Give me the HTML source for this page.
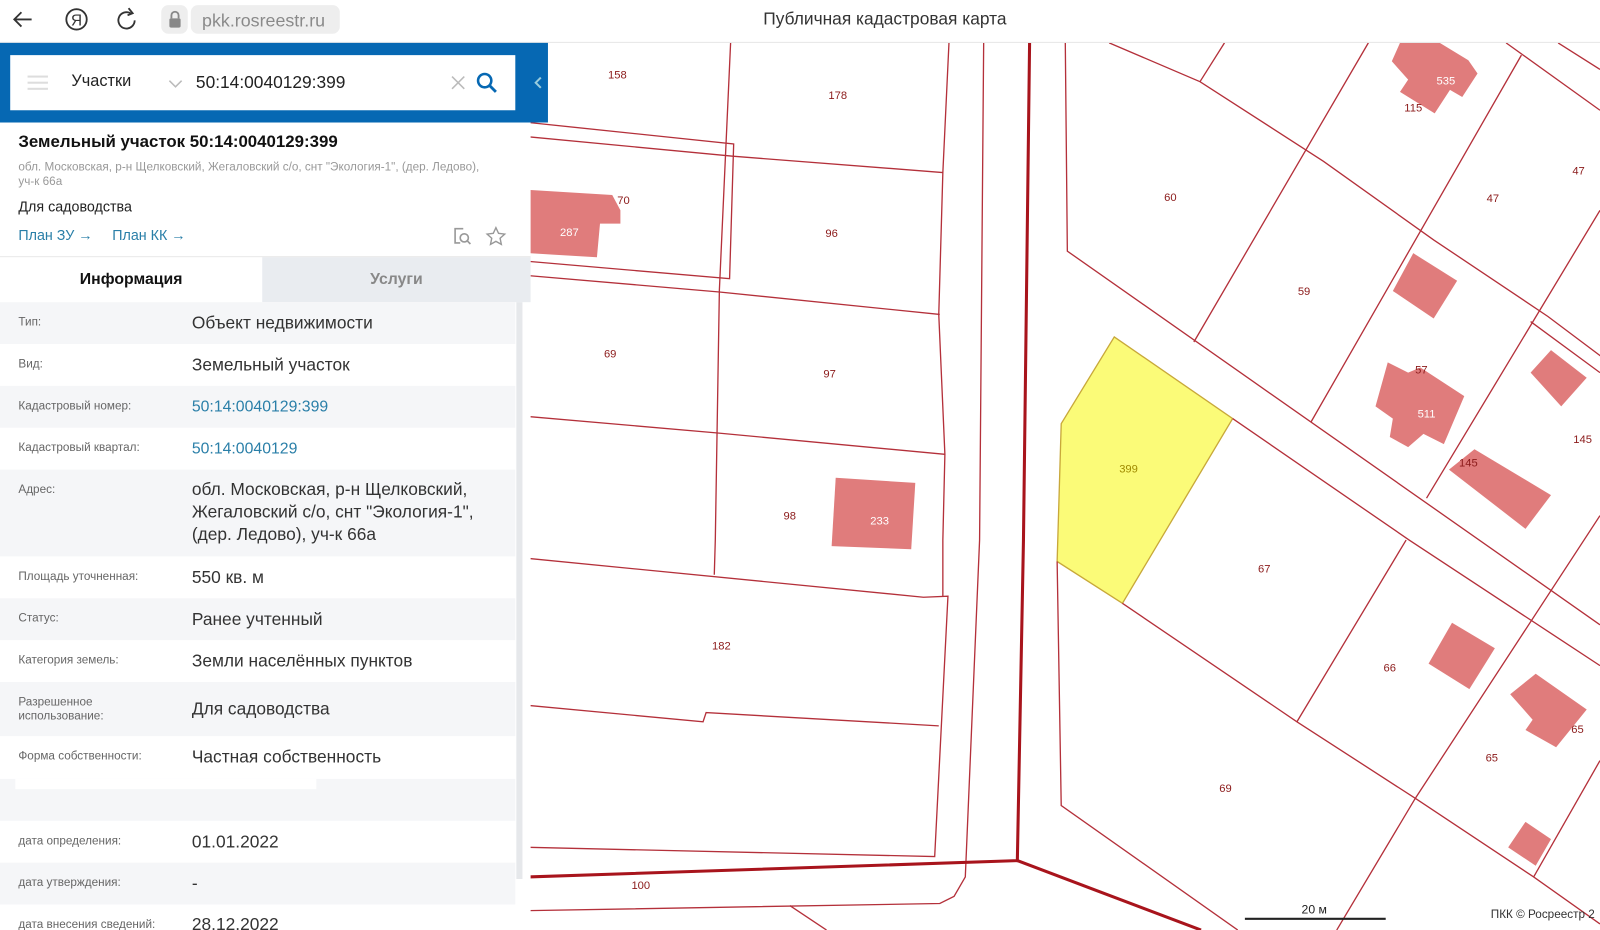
<!DOCTYPE html>
<html><head><meta charset="utf-8"><style>
*{margin:0;padding:0;box-sizing:border-box}
html,body{width:1600px;height:930px;overflow:hidden;background:#fff;font-family:"Liberation Sans","DejaVu Sans",sans-serif}
#w{position:absolute;left:0;top:0;width:1568px;height:911px;transform:scale(1.0204,1.0209);transform-origin:0 0;overflow:hidden}
svg.map{position:absolute;left:0;top:0}
.bar{position:absolute;left:0;top:0;width:1568px;height:42px;background:#fff;border-bottom:1px solid #e6e6e6}
.panel{position:absolute;left:0;top:42px;width:520px;height:869px;background:#fff}
.hdr{position:absolute;left:0;top:42px;width:537px;height:78px;background:#0668b3}
.sbox{position:absolute;left:10px;top:54px;width:495px;height:54px;background:#fff}
.row{position:absolute;left:0;width:505px;}
.lab{position:absolute;left:18px;font-size:11.5px;color:#666}
.val{position:absolute;left:188px;font-size:17px;color:#333;line-height:22px}
.lnk{color:#2a7fa8}
</style></head><body><div id="w">
<svg class="map" width="1568" height="911" viewBox="0 0 1568 911">
<g fill="#e07c7c">
<polygon points="518,186 600,191 608,206 608,219 588,219 585,252 518,248"/>
<polygon points="819,468 897,473 893,538 815,535"/>
<polygon points="1372,42 1411,42 1439,59 1448,72 1433,95 1421,88 1406,111 1372,90 1380,78 1364,60"/>
<polygon points="1385,248 1428,275 1405,312 1365,285"/>
<polygon points="1360,355 1380,365 1392,360 1435,388 1415,435 1395,425 1380,438 1362,428 1365,410 1348,398"/>
<polygon points="1500,365 1520,343 1555,370 1530,398"/>
<polygon points="1420,460 1445,440 1520,485 1495,518"/>
<polygon points="1400,650 1423,610 1465,635 1440,675"/>
<polygon points="1480,680 1505,660 1555,695 1525,732 1495,715 1502,705"/>
<polygon points="1478,830 1495,805 1520,822 1505,848"/>
</g>
<polygon points="1092,330 1208,410 1100,591 1036,550 1040,415" fill="#fbfb78" stroke="#c8a83a" stroke-width="1.3"/>
<g fill="none" stroke="#b4303a" stroke-width="1.3">
<polyline points="518,120 719,141 715,273 518,256"/>
<polyline points="518,134 718,153 924,169"/>
<polyline points="518,270 705,286 921,308"/>
<polyline points="518,408 702,424 926,445"/>
<polyline points="716,42 705,284 701,529 700,563"/>
<polyline points="930,42 924,169 920,308 926,445 924,529 924,584"/>
<polyline points="518,547 905,585 929,584 916,839 518,830"/>
<polyline points="518,691 689,707 692,698 920,711"/>
<polyline points="964,42 960,529 946,859 935,878 921,885 518,892"/>
<line x1="774" y1="887" x2="810" y2="911"/>
<polyline points="1044,42 1046,246 1568,612"/>
<polyline points="1087,42 1176,80 1297,158 1405,235 1517,310 1581,358"/>
<line x1="1176" y1="80" x2="1200" y2="42"/>
<line x1="1170" y1="335" x2="1341" y2="42"/>
<line x1="1285" y1="413" x2="1491" y2="54"/>
<line x1="1476" y1="42" x2="1568" y2="108"/>
<line x1="1527" y1="42" x2="1568" y2="68"/>
<line x1="1398" y1="488" x2="1568" y2="206"/>
<line x1="1500" y1="315" x2="1568" y2="365"/>
<polyline points="1208,410 1381,529 1568,652"/>
<polyline points="1100,591 1271,707 1387,782 1503,859 1568,905"/>
<polyline points="1036,550 1040,789 1213,911"/>
<line x1="1271" y1="707" x2="1378" y2="529"/>
<polyline points="1568,505 1387,782 1310,911"/>
<line x1="1503" y1="859" x2="1568" y2="745"/>
</g>
<g fill="none" stroke="#a8141c" stroke-width="3">
<polyline points="1009,42 1003,529 997,843 518,859"/>
<line x1="997" y1="843" x2="1177" y2="911"/>
</g>
<g font-size="11" fill="#8b1a1a" text-anchor="middle" font-family="Liberation Sans,sans-serif">
<text x="605" y="77">158</text><text x="821" y="97">178</text><text x="611" y="200">70</text>
<text x="558" y="231" fill="#fff">287</text><text x="815" y="232">96</text><text x="598" y="350">69</text>
<text x="813" y="370">97</text><text x="774" y="509">98</text><text x="862" y="514" fill="#fff">233</text>
<text x="707" y="636">182</text><text x="628" y="871">100</text><text x="1147" y="197">60</text>
<text x="1278" y="289">59</text><text x="1463" y="198">47</text><text x="1547" y="171">47</text>
<text x="1417" y="83" fill="#fff">535</text><text x="1385" y="109">115</text><text x="1393" y="366">57</text>
<text x="1398" y="409" fill="#fff">511</text><text x="1439" y="457">145</text><text x="1551" y="434">145</text>
<text x="1106" y="463" fill="#a08a00">399</text><text x="1239" y="561">67</text><text x="1362" y="658">66</text>
<text x="1462" y="746">65</text><text x="1546" y="718">65</text><text x="1201" y="776">69</text>
</g>
<line x1="1220" y1="900" x2="1358" y2="900" stroke="#222" stroke-width="2"/>
<text x="1288" y="895" font-size="12" text-anchor="middle" fill="#222">20 м</text>
<text x="1461" y="899" font-size="11.5" fill="#333">ПКК © Росреестр 2</text>
</svg>

<div class="bar">
<svg width="340" height="42" style="position:absolute;left:0;top:0">
<path d="M31 19H14M21 12l-7 7 7 7" stroke="#333" stroke-width="1.8" fill="none"/>
<circle cx="75" cy="19" r="10" stroke="#333" stroke-width="1.8" fill="none"/>
<text x="75" y="25" font-size="15" text-anchor="middle" fill="#333">Я</text>
<path d="M132 20a8 8 0 1 1-4-7" stroke="#333" stroke-width="1.8" fill="none"/><path d="M126 8l4 5-5 2" stroke="#333" stroke-width="1.8" fill="none"/>
<rect x="158" y="5" width="26" height="28" rx="7" fill="#eee"/>
<rect x="166" y="18" width="11" height="9" rx="1.5" fill="#888"/><path d="M168 18v-3a3.5 3.5 0 0 1 7 0v3" stroke="#888" stroke-width="1.8" fill="none"/>
<rect x="187" y="5" width="146" height="28" rx="7" fill="#eee"/>
<text x="198" y="26" font-size="17.5" fill="#8a8a8a">pkk.rosreestr.ru</text>
</svg>
<div style="position:absolute;left:748px;top:9px;font-size:17px;color:#333">Публичная кадастровая карта</div>
</div>

<div class="panel">
<div style="position:absolute;left:18px;top:88px;font-size:16.5px;font-weight:bold;color:#111">Земельный участок 50:14:0040129:399</div>
<div style="position:absolute;left:18px;top:115px;width:470px;font-size:11.5px;line-height:14px;color:#999">обл. Московская, р-н Щелковский, Жегаловский с/о, снт "Экология-1", (дер. Ледово), уч-к 66а</div>
<div style="position:absolute;left:18px;top:152px;font-size:14px;color:#222">Для садоводства</div>
<div style="position:absolute;left:18px;top:180px;font-size:14px" class="lnk">План ЗУ →</div>
<div style="position:absolute;left:110px;top:180px;font-size:14px" class="lnk">План КК →</div>
<svg width="60" height="24" style="position:absolute;left:440px;top:178px">
<path d="M14 4H6v14h5" stroke="#999" stroke-width="1.6" fill="none"/><circle cx="15" cy="13" r="4" stroke="#999" stroke-width="1.6" fill="none"/><path d="M18 16l3 3" stroke="#999" stroke-width="1.6"/>
<path d="M46 3l2.6 5.6 6 .7-4.5 4.1 1.2 6-5.3-3-5.3 3 1.2-6-4.5-4.1 6-.7z" stroke="#999" stroke-width="1.4" fill="none"/>
</svg>
<div style="position:absolute;left:0;top:209px;width:520px;height:1px;background:#e5e5e5"></div>
<div style="position:absolute;left:0;top:210px;width:257px;height:44px;background:#fff;font-size:15.5px;font-weight:bold;color:#111;text-align:center;line-height:44px">Информация</div>
<div style="position:absolute;left:257px;top:210px;width:263px;height:44px;background:#e9ecf0;font-size:15.5px;font-weight:bold;color:#888;text-align:center;line-height:44px">Услуги</div>
</div>

<div style="position:absolute;left:0;top:296px;width:520px;height:615px">
<div class="row" style="top:0;height:41px;background:#f5f6f8"><span class="lab" style="top:14px">Тип:</span><span class="val" style="top:10px">Объект недвижимости</span></div>
<div class="row" style="top:41px;height:41px"><span class="lab" style="top:14px">Вид:</span><span class="val" style="top:10px">Земельный участок</span></div>
<div class="row" style="top:82px;height:41px;background:#f5f6f8"><span class="lab" style="top:14px">Кадастровый номер:</span><span class="val lnk" style="top:10px;font-size:15.5px">50:14:0040129:399</span></div>
<div class="row" style="top:123px;height:41px"><span class="lab" style="top:14px">Кадастровый квартал:</span><span class="val lnk" style="top:10px;font-size:15.5px">50:14:0040129</span></div>
<div class="row" style="top:164px;height:85px;background:#f5f6f8"><span class="lab" style="top:14px">Адрес:</span><span class="val" style="top:9px;width:310px">обл. Московская, р-н Щелковский, Жегаловский с/о, снт "Экология-1", (дер. Ледово), уч-к 66а</span></div>
<div class="row" style="top:249px;height:41px"><span class="lab" style="top:14px">Площадь уточненная:</span><span class="val" style="top:10px">550 кв. м</span></div>
<div class="row" style="top:290px;height:41px;background:#f5f6f8"><span class="lab" style="top:14px">Статус:</span><span class="val" style="top:10px">Ранее учтенный</span></div>
<div class="row" style="top:331px;height:41px"><span class="lab" style="top:14px">Категория земель:</span><span class="val" style="top:10px">Земли населённых пунктов</span></div>
<div class="row" style="top:372px;height:53px;background:#f5f6f8"><span class="lab" style="top:13px;line-height:14px">Разрешенное<br>использование:</span><span class="val" style="top:16px">Для садоводства</span></div>
<div class="row" style="top:425px;height:42px"><span class="lab" style="top:14px">Форма собственности:</span><span class="val" style="top:10px">Частная собственность</span></div>
<div class="row" style="top:467px;height:41px;background:#f5f6f8"><div style="position:absolute;left:15px;top:0;width:295px;height:10px;background:#fff"></div></div>
<div class="row" style="top:508px;height:41px"><span class="lab" style="top:14px">дата определения:</span><span class="val" style="top:10px">01.01.2022</span></div>
<div class="row" style="top:549px;height:41px;background:#f5f6f8"><span class="lab" style="top:14px">дата утверждения:</span><span class="val" style="top:10px">-</span></div>
<div class="row" style="top:590px;height:30px"><span class="lab" style="top:14px">дата внесения сведений:</span><span class="val" style="top:9px">28.12.2022</span></div>
<div style="position:absolute;left:506px;top:0;width:6px;height:565px;background:#e6e8eb"></div>
</div>

<div class="hdr"></div>
<div class="sbox">
<div style="position:absolute;left:17px;top:20px;width:20px;height:2px;background:#ddd;box-shadow:0 6px 0 #ddd,0 12px 0 #ddd"></div>
<div style="position:absolute;left:60px;top:17px;font-size:16px;color:#222">Участки</div>
<svg width="14" height="10" style="position:absolute;left:155px;top:23px"><path d="M1 2l6 6 6-6" stroke="#bbb" stroke-width="1.5" fill="none"/></svg>
<div style="position:absolute;left:182px;top:17px;font-size:17px;color:#222">50:14:0040129:399</div>
<svg width="14" height="14" style="position:absolute;left:432px;top:20px"><path d="M1 1l12 12M13 1L1 13" stroke="#bbb" stroke-width="1.5"/></svg>
<svg width="22" height="22" style="position:absolute;left:456px;top:16px"><circle cx="9" cy="9" r="6.5" stroke="#0668b3" stroke-width="2.5" fill="none"/><path d="M14 14l6 6" stroke="#0668b3" stroke-width="2.8"/></svg>
</div>
<svg width="12" height="14" style="position:absolute;left:522px;top:74px"><path d="M8 2L3 7l5 5" stroke="#9cd" stroke-width="2" fill="none"/></svg>
</div></body></html>
